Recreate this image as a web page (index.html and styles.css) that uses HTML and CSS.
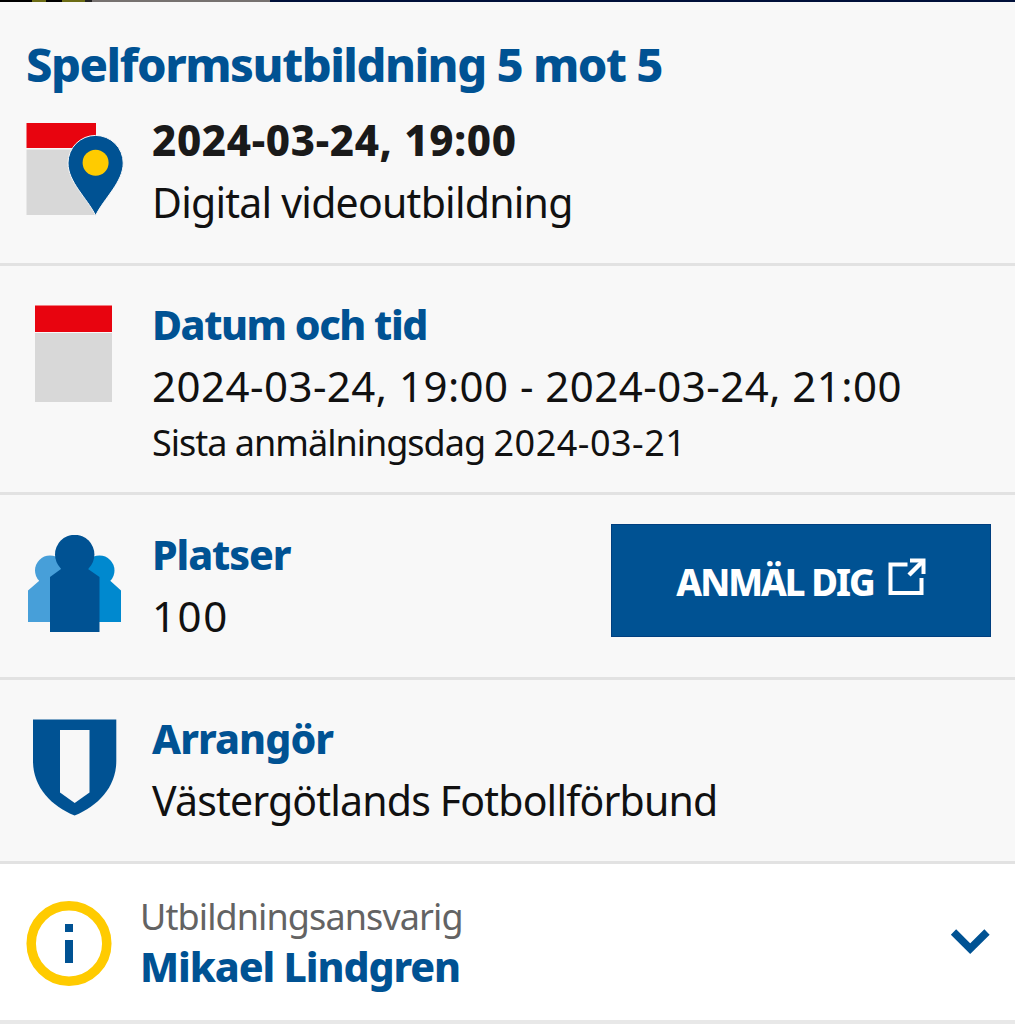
FILE: index.html
```
<!DOCTYPE html>
<html lang="sv">
<head>
  <meta charset="UTF-8">
  <meta name="viewport" content="width=device-width, initial-scale=1.0">
  <title>Spelformsutbildning 5 mot 5</title>
  <link rel="stylesheet" href="styles.css">
</head>
<body>
  <div class="top-strip"></div>

  <main class="event">
    <section class="row row-intro">
      <h1 class="title">Spelformsutbildning 5 mot 5</h1>
      <div class="row-body">
        <svg class="icon" width="101" height="98" viewBox="0 0 101 98">
          <path fill="#e8040f" d="M2.500 2h69.500v25H2.500z"/>
          <path fill="#d8d8d8" d="M2.500 28.500h69.500v65.500H2.500z"/>
          <path fill="#005293" stroke="#f8f8f8" stroke-width="1" d="M71.600 94.500C63 77 44 61 44 42a27.600 27.600 0 0 1 55.200 0c0 19-19 35-27.600 52.500z"/>
          <circle cx="71.600" cy="41.700" r="13" fill="#ffcb00"/>
        </svg>
        <div class="text">
          <p class="date">2024-03-24, 19:00</p>
          <p class="place">Digital videoutbildning</p>
        </div>
      </div>
    </section>

    <section class="row row-date">
      <div class="row-body">
        <svg class="icon" width="101" height="98" viewBox="0 0 101 98">
          <path fill="#e8040f" d="M11 .5h77v26.500H11z"/>
          <path fill="#d8d8d8" d="M11 28h77v69H11z"/>
        </svg>
        <div class="text">
          <h2 class="heading-date">Datum och tid</h2>
          <p class="period">2024-03-24, 19:00 - 2024-03-24, 21:00</p>
          <p class="deadline">Sista anmälningsdag <span class="deadline-date">2024-03-21</span></p>
        </div>
      </div>
    </section>

    <section class="row row-seats">
      <div class="row-body">
        <svg class="icon" width="101" height="98" viewBox="0 0 101 98">
          <circle cx="26" cy="35.500" r="15" fill="#479fd9"/>
          <path fill="#479fd9" d="M4 87V55.500L15 46l3-4h20v45z"/>
          <circle cx="75.500" cy="35.500" r="15" fill="#0089cf"/>
          <path fill="#0089cf" d="M97 87V55.500L86.500 46l-3-4h-20v45z"/>
          <circle cx="50.700" cy="19.500" r="19.700" fill="#005293"/>
          <path fill="#005293" d="M26 97V42l11-8h27l11.500 8v55z"/>
        </svg>
        <div class="text">
          <h2 class="heading-seats">Platser</h2>
          <p class="seats">100</p>
        </div>
        <a class="signup" href="#">
          <span>ANMÄL DIG</span>
          <svg width="38" height="38" viewBox="0 0 38 38" fill="none" stroke="#fff">
            <path stroke-width="4" d="M19.500 6.500H2.500v28.500h31V20"/>
            <path stroke-width="4" d="M22 2.500h13.500v13.500"/>
            <path stroke-width="4.500" d="M21 17L35 3"/>
          </svg>
        </a>
      </div>
    </section>

    <section class="row row-organizer">
      <div class="row-body">
        <svg class="icon" width="101" height="98" viewBox="0 0 101 98">
          <path fill="#005293" d="M9 .5h83.300V42C92.300 68 74 87 50.600 96.500 27 87 9 68 9 42z"/>
          <path fill="#f8f8f8" d="M36 11h29.500v62.500L50.700 84 36 73.500z"/>
        </svg>
        <div class="text">
          <h2 class="heading-organizer">Arrangör</h2>
          <p class="organizer">Västergötlands Fotbollförbund</p>
        </div>
      </div>
    </section>

    <section class="row row-contact">
      <div class="row-body">
        <svg class="icon" width="90" height="88" viewBox="0 0 90 88">
          <circle cx="45" cy="43.500" r="37.800" fill="none" stroke="#ffcb00" stroke-width="9.500"/>
          <path fill="#005293" d="M41 24h8v8h-8zM41 40h8v23h-8z"/>
        </svg>
        <div class="text">
          <p class="role">Utbildningsansvarig</p>
          <p class="name">Mikael Lindgren</p>
        </div>
        <svg class="chevron" width="40" height="28" viewBox="0 0 40 28">
          <path fill="none" stroke="#005293" stroke-width="7.500" d="M3.500 4l16.700 16.700L37 4"/>
        </svg>
      </div>
    </section>
  </main>
</body>
</html>
```
FILE: styles.css
```
body {
  margin: 0;
  height: 1024px;
  overflow: hidden;
  background-color: #fff;
  color: #111;
  font-family: "Noto Sans", "Open Sans", sans-serif;
}

h1,
h2,
p {
  margin: 0;
}

.top-strip {
  height: 2px;
  background: linear-gradient(90deg, #000 0 32px, #6b6b14 32px 46px, #000 46px 62px, #6b6b14 62px 85px, #222 85px 92px, #777270 92px 270px, #00103a 270px);
}

.row {
  box-sizing: border-box;
  padding-left: 24px;
  background-color: #f8f8f8;
  border-bottom: 3px solid #e2e2e2;
}

.row-intro {
  height: 264px;
  padding-top: 34px;
}

.row-date {
  height: 229px;
  padding-top: 27px;
}

.row-seats {
  height: 185px;
  padding-top: 28px;
}

.row-organizer {
  height: 184px;
  padding-top: 27px;
}

.row-contact {
  height: 160px;
  padding-top: 28px;
  background-color: #fff;
  border-bottom: 4px solid #e8e8e8;
}

.row-body {
  display: flex;
  align-items: flex-start;
}

.icon {
  flex: none;
  margin: 12px 27px 0 0;
}

.text {
  flex: 1;
  white-space: nowrap;
}

.text h2,
.text p {
  font-size: 41px;
  line-height: 62px;
}

.text h2 {
  font-weight: 800;
  color: #005293;
}

.title {
  margin-left: 2px;
  font-size: 47px;
  line-height: 56px;
  font-weight: 800;
  letter-spacing: -1.44px;
  color: #005293;
}

.row-intro .row-body {
  margin-top: 17px;
}

.text .date {
  font-size: 42px;
  font-weight: 800;
  letter-spacing: 0.66px;
  color: #1a1a1a;
}

.place {
  letter-spacing: -0.76px;
}

.text .heading-date {
  letter-spacing: -1.45px;
}

.text .period {
  font-size: 42px;
  letter-spacing: 0.46px;
}

.text .deadline {
  font-size: 36px;
  line-height: 52px;
  letter-spacing: -1px;
}

.text .deadline-date {
  letter-spacing: 0.5px;
}

.heading-seats {
  letter-spacing: -1.1px;
}

.text .seats {
  font-size: 42px;
  letter-spacing: 1.6px;
}

.heading-organizer {
  letter-spacing: -0.9px;
}

.organizer {
  letter-spacing: -0.82px;
}

.signup {
  display: flex;
  align-items: center;
  justify-content: center;
  gap: 14px;
  box-sizing: border-box;
  width: 380px;
  height: 113px;
  margin: 1px 24px 0 0;
  border: 1px solid #003f7f;
  background-color: #005293;
  color: #fff;
  font-size: 36.5px;
  font-weight: 800;
  letter-spacing: -2px;
  text-decoration: none;
}

.signup span {
  margin-top: 2px;
}

.signup svg {
  margin-bottom: 7px;
}

.row-contact .icon {
  margin: 8px 26px 0 0;
}

.text .role {
  font-size: 36px;
  line-height: 50px;
  letter-spacing: -0.9px;
  color: #636363;
}

.text .name {
  line-height: 48px;
  font-weight: 800;
  letter-spacing: -1.1px;
  color: #005293;
}

.chevron {
  margin: 36px 25px 0 0;
}
```
